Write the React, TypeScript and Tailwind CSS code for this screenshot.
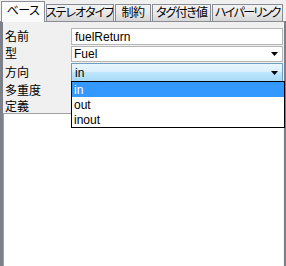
import { FC } from "react";

const tabs = [
  { t: "ステレオタイプ", w: "w-[68px] tracking-[-1px]" },
  { t: "制約", w: "w-[36px] tracking-[-0.5px]" },
  { t: "タグ付き値", w: "w-[59px] tracking-[-1px]" },
  { t: "ハイパーリンク", w: "w-[71px] tracking-[-1.6px]" },
];
const options = ["in", "out", "inout"];

const Arrow: FC = () => (
  <svg width="7" height="4" viewBox="0 0 7 4" className="shrink-0">
    <path d="M0 0H7L3.5 4Z" fill="#000" />
  </svg>
);

const Label: FC<{ text: string; className?: string }> = ({ text, className = "" }) => (
  <div className={`w-[68px] shrink-0 pl-[2px] flex items-center ${className}`}>{text}</div>
);

const App: FC = () => {
  return (
    <div
      className="w-[286px] h-[266px] bg-[#f0f0f0] relative overflow-hidden flex flex-col text-[12px] text-black leading-none [font-feature-settings:'palt']"
      style={{ fontFamily: '"Liberation Sans", "Noto Sans CJK JP", sans-serif' }}
    >
      {/* tabs */}
      <div className="h-[22px] flex items-end shrink-0 border-b border-[#898c95]">
        <div className="w-[44px] h-[21px] -mb-px ml-px bg-[#fbfbfb] border border-b-0 border-[#898c95] flex items-center justify-center pb-[2px] whitespace-nowrap tracking-[-0.5px]">
          ベース
        </div>
        {tabs.map((x, i) => (
          <div
            key={i}
            className={`${x.w} h-[17px] ml-[1px] border border-b-0 border-[#898c95] bg-gradient-to-b from-[#f3f3f3] via-[#e9e9e9] to-[#d6d6d6] flex items-center justify-center whitespace-nowrap overflow-hidden`}
          >
            {x.t}
          </div>
        ))}
      </div>

      {/* body */}
      <div className="flex-1 flex flex-col border-l-[3px] border-r-2 border-[#7d8088] pt-[6px] relative">
        <div className="flex h-[17px]">
          <Label text="名前" />
          <div className="flex-1 mr-px bg-white border border-[#b5b5b5] flex items-center pl-[3px]">fuelReturn</div>
        </div>
        <div className="flex h-[16px] mt-[1px]">
          <Label text="型" />
          <div className="flex-1 mr-px bg-white border border-[#b5b5b5] flex items-center pl-[2px] pr-[4px] justify-between">
            <span>Fuel</span>
            <Arrow />
          </div>
        </div>
        <div className="flex h-[19px] mt-[1px]">
          <Label text="方向" />
          <div className="flex-1 mr-px border border-[#6e9ec0] bg-[linear-gradient(#eaf6fd_0%,#d9f0fc_45%,#bee6fd_50%,#a7d9f5_100%)] flex items-center pl-[3px] pr-[4px] justify-between">
            <span>in</span>
            <Arrow />
          </div>
        </div>
        <div className="flex h-[18px]">
          <Label text="多重度" />
        </div>
        <div className="flex h-[13px]">
          <Label text="定義" />
        </div>
        <div className="flex-1 bg-white border-l border-t border-[#a0a0a0] mr-px"></div>

        {/* open dropdown */}
        <div className="absolute left-[68px] top-[59px] w-[214px] h-[47px] bg-white border border-black flex flex-col">
          {options.map((o, i) => (
            <div
              key={o}
              className={`h-[15px] flex items-center pl-[2px] ${i === 0 ? "bg-[#3399ff] text-white" : ""}`}
            >
              {o}
            </div>
          ))}
        </div>
      </div>
    </div>
  );
};

export default App;
